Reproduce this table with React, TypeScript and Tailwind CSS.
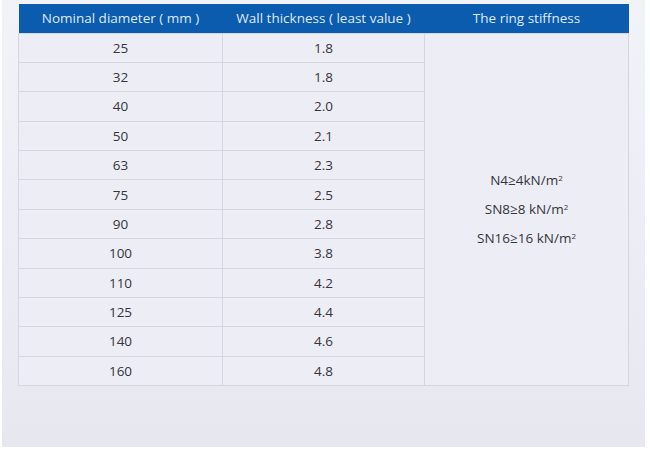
const rows: [string, string][] = [
  ['25', '1.8'],
  ['32', '1.8'],
  ['40', '2.0'],
  ['50', '2.1'],
  ['63', '2.3'],
  ['75', '2.5'],
  ['90', '2.8'],
  ['100', '3.8'],
  ['110', '4.2'],
  ['125', '4.4'],
  ['140', '4.6'],
  ['160', '4.8'],
];

export default function App() {
  return (
    <div className="h-[450px] w-[650px] bg-white font-['Open_Sans',sans-serif]">
      <div className="ml-[2px] h-[447px] w-[643px] bg-gradient-to-b from-[#f2f3f9] to-[#e7e7f0] pl-[16px] pt-[4px]">
        <table className="w-[610px] table-fixed border-collapse text-[13.5px] text-[#35353b]">
          <colgroup>
            <col className="w-[204px]" />
            <col className="w-[202px]" />
            <col className="w-[204px]" />
          </colgroup>
          <thead>
            <tr className="h-[29px] bg-[#0b5bae] text-[#dfeaf8]">
              <th className="font-normal">Nominal diameter ( mm )</th>
              <th className="font-normal">Wall thickness ( least value )</th>
              <th className="font-normal">The ring stiffness</th>
            </tr>
          </thead>
          <tbody className="bg-[#ededf5]">
            {rows.map(([d, w], i) => (
              <tr key={d} className="h-[29.4px]">
                <td className="border border-[#d6d6e0] text-center">{d}</td>
                <td className="border border-[#d6d6e0] text-center">{w}</td>
                {i === 0 && (
                  <td rowSpan={12} className="border border-[#d6d6e0] text-center leading-[29px]">
                    <div>N4≥4kN/m<sup className="text-[8px]">2</sup></div>
                    <div>SN8≥8 kN/m<sup className="text-[8px]">2</sup></div>
                    <div>SN16≥16 kN/m<sup className="text-[8px]">2</sup></div>
                  </td>
                )}
              </tr>
            ))}
          </tbody>
        </table>
      </div>
    </div>
  );
}
